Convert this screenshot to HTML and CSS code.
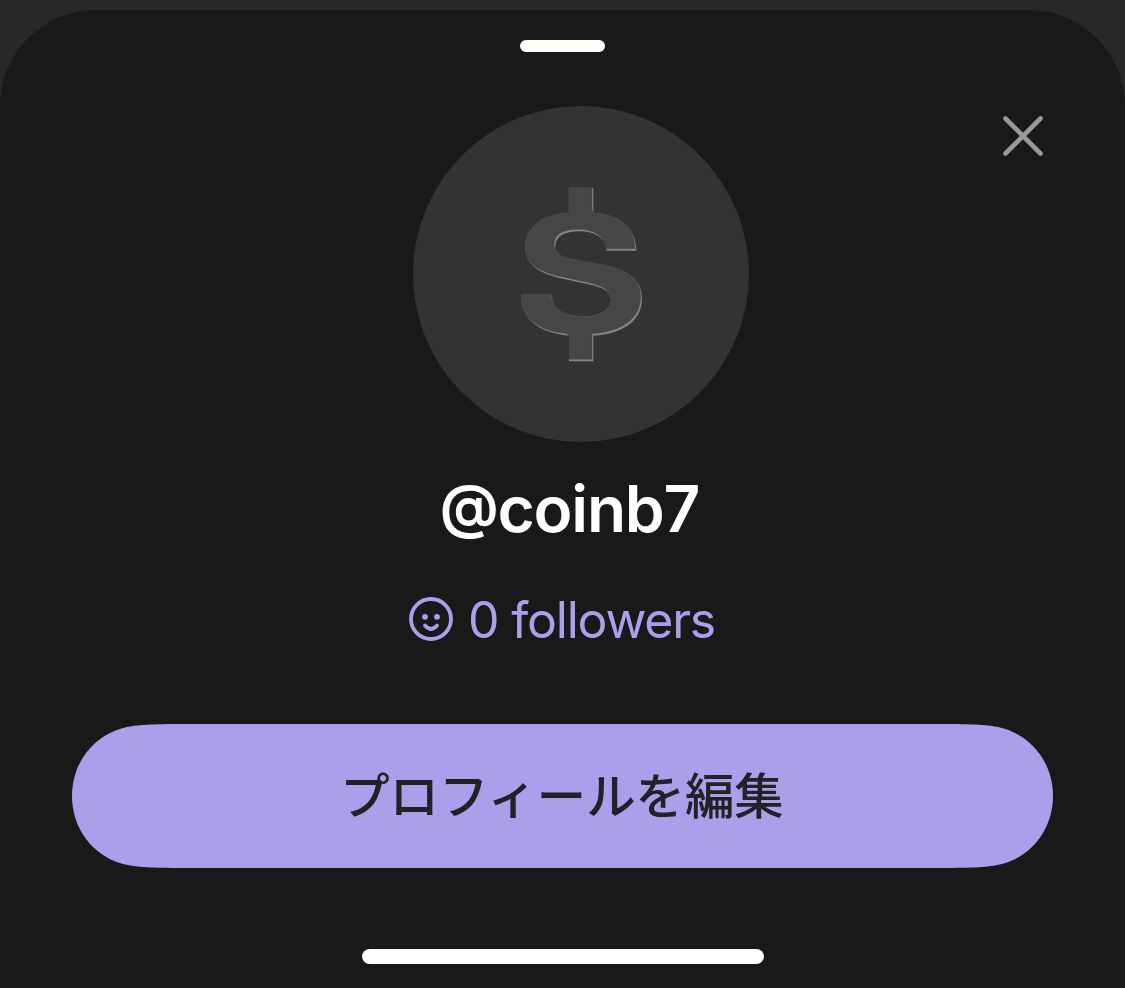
FILE: index.html
```html
<!DOCTYPE html>
<html lang="ja">
<head>
<meta charset="utf-8">
<title>@coinb7</title>
<link rel="stylesheet" href="styles.css">
</head>
<body>
<main class="sheet">
  <div class="grabber"></div>
  <button class="close" aria-label="Close">
    <svg viewBox="0 0 42 42"><path d="M3.5 3.5 38.5 38.5M38.5 3.5 3.5 38.5"/></svg>
  </button>
  <div class="avatar">
    <svg class="coin" viewBox="120 50 369 525">
      <defs>
        <path id="sign" d="M267 52H340V127C420 133 469 175 469 241H380C378 204 346 183 297 183C254 183 226 199 226 228C226 249 242 260 275 267L380 286C450 302 486 331 486 385C486 450 430 490 340 496V573H267V496C175 488 123 445 123 372H214C216 415 250 438 305 438C360 438 393 420 393 388C393 365 370 352 325 342L235 322C170 305 136 280 136 230C136 170 185 133 267 127Z"/>
        <clipPath id="edge"><use href="#sign"/></clipPath>
      </defs>
      <use href="#sign" fill="#858585"/>
      <g clip-path="url(#edge)"><use href="#sign" fill="#464646" stroke="#464646" stroke-width="1" x="-4" y="-6"/></g>
      <path d="M267 52V127C185 133 136 170 136 230M380 286L275 267C242 260 226 249 226 228M123 372H214C216 415 250 438 305 438" fill="none" stroke="#464646" stroke-width="3"/>
    </svg>
  </div>
  <h1 class="handle"><span class="at">@</span>coinb7</h1>
  <div class="followers">
    <svg class="smile" viewBox="0 0 44 44">
      <circle class="line" cx="22" cy="22" r="20"/>
      <circle class="eye" cx="16" cy="19.8" r="2.9"/>
      <circle class="eye" cx="28" cy="19.8" r="2.9"/>
      <path class="line" d="M16 28.500Q22 35.500 28 28.500"/>
    </svg>
    <span class="count">0 followers</span>
  </div>
  <button class="edit"><span class="edit-label">プロフィールを編集</span></button>
  <div class="home"></div>
</main>
</body>
</html>
```
FILE: styles.css
```css
* { box-sizing: border-box; }
body {
  margin: 0;
  padding-top: 10px;
  background: #28282a;
  font-family: Inter, "Noto Sans CJK JP", sans-serif;
}
.sheet {
  position: relative;
  display: flex;
  flex-direction: column;
  align-items: center;
  width: 1125px;
  height: 978px;
  padding-top: 30px;
  border-radius: 96px 96px 0 0;
  background: #191919;
}
.grabber {
  width: 85px;
  height: 12px;
  border-radius: 6px;
  background: #fffffa;
}
.close {
  position: absolute;
  top: 105px;
  right: 81px;
  width: 42px;
  height: 42px;
  padding: 0;
  border: 0;
  background: none;
}
.close svg {
  display: block;
  fill: none;
  stroke: #999;
  stroke-width: 4.6;
  stroke-linecap: round;
}
.avatar {
  display: flex;
  align-items: center;
  justify-content: center;
  width: 336px;
  height: 336px;
  margin: 54px 0 0 37px;
  border-radius: 50%;
  background: #333;
}
.coin {
  width: 123px;
  height: 175px;
}
.handle {
  height: 76px;
  margin: 29px 0 0 14px;
  font-size: 64px;
  font-weight: 620;
  line-height: 76px;
  letter-spacing: -1.2px;
  color: #fff;
}
.at {
  font-size: 59px;
  font-weight: 600;
  line-height: 1;
  vertical-align: 5px;
}
.followers {
  display: flex;
  align-items: center;
  gap: 15px;
  height: 60px;
  margin: 42px 1px 0 0;
  color: #aa9feb;
}
.smile {
  width: 44px;
  height: 44px;
}
.smile .line {
  fill: none;
  stroke: currentColor;
  stroke-width: 3.8;
  stroke-linecap: round;
}
.smile .eye { fill: currentColor; }
.count {
  padding-top: 2px;
  font-size: 50px;
  line-height: 60px;
  letter-spacing: -1.2px;
  white-space: nowrap;
}
.edit {
  display: flex;
  align-items: center;
  justify-content: center;
  width: 981px;
  height: 144px;
  margin-top: 75px;
  padding: 0;
  border: 0;
  background: #aa9feb;
  clip-path: path("M106 0H875C905 .2 919 1 931 4.200C961 13 981 40 981 72C981 104 961 131 931 139.800C919 143 905 143.800 875 144H106C76 143.800 62 143 50 139.800C20 131 0 104 0 72C0 40 20 13 50 4.200C62 1 76 .2 106 0Z");
}
.edit-label {
  padding: 0 1px 6px 0;
  font-family: "Noto Sans CJK JP", sans-serif;
  font-size: 49.4px;
  font-weight: 500;
  line-height: 72px;
  color: #222226;
}
.home {
  width: 402px;
  height: 15px;
  margin-top: 81px;
  border-radius: 8px;
  background: #fff;
}
```
